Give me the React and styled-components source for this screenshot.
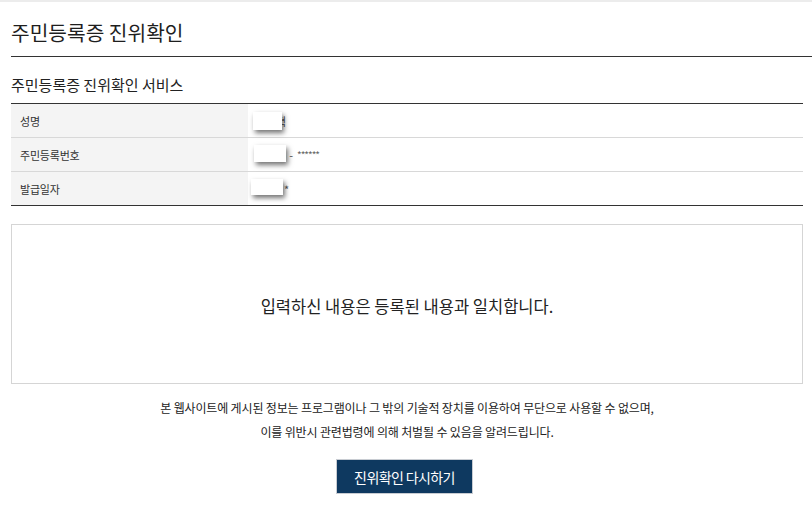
import React from "react";
import styled, { createGlobalStyle } from "styled-components";

const GlobalStyle = createGlobalStyle`
    html, body {
        margin: 0;
        padding: 0;
        background: #fff;
    }
    body {
        font-family: "Noto Sans CJK KR", "Noto Sans", sans-serif;
        color: #222;
    }
`;

const TopLine = styled.div`
    height: 2px;
    background: #ececec;
`;

const TitleBar = styled.div`
    margin-left: 11px;
    height: 54px;
    border-bottom: 1px solid #333;
    display: flex;
    align-items: center;
    & h1 {
        margin: 5px 0 0;
        font-size: 20.3px;
        font-weight: 400;
        letter-spacing: 0;
        color: #1e1e1e;
    }
`;

const Content = styled.div`
    margin: 0 9px 0 11px;
`;

const SubTitle = styled.h2`
    margin: 0;
    height: 46px;
    display: flex;
    align-items: center;
    padding-top: 8px;
    box-sizing: border-box;
    font-size: 15px;
    font-weight: 400;
    letter-spacing: 0;
    color: #222;
`;

const Table = styled.div`
    border-top: 1px solid #333;
    border-bottom: 1px solid #333;
`;

const Row = styled.div`
    display: grid;
    grid-template-columns: 237px 1fr;
    height: 33px;
    border-top: ${(p) => (p.first ? "none" : "1px solid #d8d8d8")};
`;

const Label = styled.div`
    background: #f4f4f4;
    display: flex;
    align-items: center;
    padding-left: 9px;
    font-size: 11px;
    letter-spacing: -0.2px;
    color: #333;
`;

const Value = styled.div`
    display: flex;
    align-items: center;
    padding-left: ${(p) => p.pad}px;
    font-size: 11px;
    color: #333;
`;

const Redact = styled.span`
    position: relative;
    z-index: 1;
    display: inline-block;
    width: ${(p) => p.w}px;
    height: ${(p) => p.h || 17}px;
    margin-top: ${(p) => p.top || 0}px;
    background: #fff;
    box-shadow: 2px 3px 5px rgba(0, 0, 0, 0.55);
`;

const Peek = styled.span`
    margin-left: ${(p) => p.ml || 0}px;
    color: #555;
`;

const Stars = styled.span`
    font-size: 10px;
    letter-spacing: -1px;
    color: #666;
    margin-left: 4px;
`;

const ResultBox = styled.div`
    margin-top: 18px;
    height: 160px;
    box-sizing: border-box;
    border: 1px solid #d5d5d5;
    display: flex;
    align-items: center;
    justify-content: center;
    padding-top: 3px;
    font-size: 16.5px;
    letter-spacing: 0;
    color: #222;
`;

const Notice = styled.p`
    margin: 12px 0 0;
    text-align: center;
    font-size: 12px;
    line-height: 24px;
    letter-spacing: -0.15px;
    color: #222;
`;

const ButtonRow = styled.div`
    display: flex;
    justify-content: center;
    margin-top: 15px;
`;

const Button = styled.button`
    width: 137px;
    height: 35px;
    background: #0e3960;
    border: 1px solid #c8ccd2;
    color: #fff;
    font-family: inherit;
    font-size: 14px;
    letter-spacing: -0.6px;
    cursor: pointer;
    margin-right: 5px;
`;

export default function App() {
    return (
        <>
            <GlobalStyle />
            <TopLine />
            <TitleBar>
                <h1>주민등록증 진위확인</h1>
            </TitleBar>
            <Content>
                <SubTitle>주민등록증 진위확인 서비스</SubTitle>
                <Table>
                    <Row first>
                        <Label>성명</Label>
                        <Value pad={5}>
                            <Redact w={29} h={18} />
                            <Peek ml={-6}>혁</Peek>
                        </Value>
                    </Row>
                    <Row>
                        <Label>주민등록번호</Label>
                        <Value pad={6}>
                            <Redact w={32} h={17} top={-2} />
                            <Peek ml={-3}>) -</Peek>
                            <Stars>******</Stars>
                        </Value>
                    </Row>
                    <Row>
                        <Label>발급일자</Label>
                        <Value pad={3}>
                            <Redact w={32} h={16} top={-3} />
                            <Peek ml={1}>*</Peek>
                        </Value>
                    </Row>
                </Table>
                <ResultBox>입력하신 내용은 등록된 내용과 일치합니다.</ResultBox>
                <Notice>
                    본 웹사이트에 게시된 정보는 프로그램이나 그 밖의 기술적 장치를 이용하여 무단으로 사용할 수 없으며,
                    <br />
                    이를 위반시 관련법령에 의해 처벌될 수 있음을 알려드립니다.
                </Notice>
                <ButtonRow>
                    <Button>진위확인 다시하기</Button>
                </ButtonRow>
            </Content>
        </>
    );
}
